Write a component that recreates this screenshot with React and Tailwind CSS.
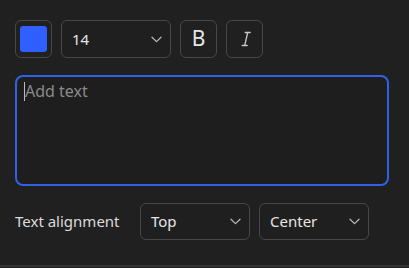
import React from 'react';

const Chevron = () => (
  <svg width="11" height="7" viewBox="0 0 11 7" fill="none" stroke="#b5b5b5" strokeWidth="1.3" strokeLinecap="round" strokeLinejoin="round">
    <path d="M1 1.2 5.5 5.6 10 1.2" />
  </svg>
);

const ItalicIcon = () => (
  <svg width="12" height="16" viewBox="0 0 12 16" fill="none" stroke="#c8c8c8" strokeWidth="1.3" strokeLinecap="round">
    <path d="M6.2 1.5h5M3.2 14.5h5M8.7 1.5 5.7 14.5" />
  </svg>
);

const Select = ({ value, height = 'h-[38px]' }) => (
  <div className={`w-[110px] ${height} flex items-center justify-between pl-[10px] pr-[8px] rounded-[6px] border border-[#474747] bg-[#1f1f1f] text-[#e6e6e6] text-[15px]`}>
    <span>{value}</span>
    <Chevron />
  </div>
);

const App = () => {
  return (
    <div className="w-[409px] h-[268px] bg-[#202020] flex flex-col" style={{ fontFamily: '"Noto Sans", "Open Sans", sans-serif' }}>
      <div className="flex-1 flex flex-col pl-[15px] pt-[20px]">
        <div className="flex items-center gap-[9px]">
          <div className="w-[37px] h-[38px] rounded-[6px] border border-[#474747] flex items-center justify-center">
            <div className="w-[27px] h-[26px] rounded-[3px] bg-[#2f5fff]" />
          </div>
          <Select value="14" />
          <div className="w-[37px] h-[38px] rounded-[6px] border border-[#474747] flex items-center justify-center text-[#e6e6e6] text-[21px]">
            B
          </div>
          <div className="w-[37px] h-[38px] rounded-[6px] border border-[#474747] flex items-center justify-center">
            <ItalicIcon />
          </div>
        </div>

        <div className="mt-[17px] w-[374px] h-[111px] rounded-[8px] border-2 border-[#2f62e6] bg-[#1e1e1e] pl-[7px] pt-[2px]">
          <div className="flex items-center text-[16px] text-[#8a8a8a]">
            <span className="w-px h-[19px] bg-[#bdbdbd]" />
            <span>Add text</span>
          </div>
        </div>

        <div className="mt-[17px] flex items-center">
          <span className="w-[125px] text-[15px] text-[#dcdcdc]">Text alignment</span>
          <Select value="Top" height="h-[37px]" />
          <div className="w-[9px]" />
          <Select value="Center" height="h-[37px]" />
        </div>
      </div>
      <div className="h-[2px] bg-[#333333] mb-[1px]" />
    </div>
  );
};

export default App;
